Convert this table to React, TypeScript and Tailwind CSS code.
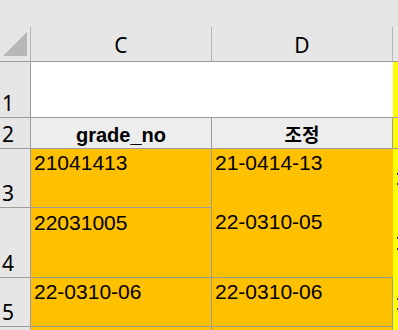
const hdr = "bg-[#e6e6e6] text-[21px] text-black [font-family:'Noto_Sans','Noto_Sans_CJK_KR',sans-serif]";
const num = "text-[21px] leading-none text-black [font-family:'Liberation_Sans',Arial,sans-serif]";

function RowHead({ n }: { n: string }) {
	return (
		<div className={`${hdr} flex items-end border-r border-b border-[#9b9b9b] pl-[2px] leading-[27px]`}>
			<span>{n}</span>
		</div>
	);
}

function ColHead({ label, last }: { label?: string; last?: boolean }) {
	return (
		<div className={`${hdr} flex flex-col justify-end border-b border-[#9b9b9b]`}>
			<div
				className={`flex h-[34px] items-center justify-center pt-[2px] leading-[27px] ${
					last ? "" : "border-r border-[#b4b4b4]"
				}`}
			>
				{label}
			</div>
		</div>
	);
}

function Dot() {
	return <div className="ml-[4px] h-[2px] w-[2px] bg-[#3a3000]" />;
}

export default function App() {
	return (
		<div className="grid h-[330px] w-[398px] grid-cols-[31px_181px_181px_1fr] grid-rows-[62px_56px_31px_59px_70px_49px_1fr] overflow-hidden bg-white">
			{/* header row */}
			<div className="flex flex-col justify-end border-b border-[#9b9b9b] bg-[#e6e6e6]">
				<div className="h-[34px] border-r border-[#b4b4b4] pl-[3px] pt-[5px]">
					<svg width="24" height="24" viewBox="0 0 24 24">
						<polygon points="0,24 24,0 24,24" fill="#b7b7b7" />
					</svg>
				</div>
			</div>
			<ColHead label="C" />
			<ColHead label="D" />
			<ColHead last />

			{/* row 1 */}
			<RowHead n="1" />
			<div className="col-span-2 border-b border-[#9b9b9b] bg-white" />
			<div className="border-b border-[#9b9b9b] bg-[#ffff00]" />

			{/* row 2 */}
			<RowHead n="2" />
			<div className="flex items-end justify-center border-r border-b border-[#9b9b9b] bg-[#ededed] pb-[1px]">
				<span className="text-[20px] font-bold leading-[23px] text-black [font-family:'Liberation_Sans',Arial,sans-serif]">
					grade_no
				</span>
			</div>
			<div className="flex items-end justify-center border-r border-b border-[#9b9b9b] bg-[#ededed] pb-[5px]">
				<span className="text-[19px] font-bold leading-none text-black [font-family:'Noto_Sans_CJK_KR',sans-serif]">
					조정
				</span>
			</div>
			<div className="border-b border-[#9b9b9b] bg-[#ffff00]" />

			{/* row 3 */}
			<RowHead n="3" />
			<div className={`${num} border-r border-b border-[#9c9c9c] bg-[#ffc000] pl-[3px] pt-[3px]`}>21041413</div>
			<div className={`${num} row-span-2 flex flex-col border-b border-[#9c9c9c] bg-[#ffc000] pl-[3px] pt-[3px]`}>
				<div>21-0414-13</div>
				<div className="mt-[38px]">22-0310-05</div>
			</div>
			<div className="flex flex-col bg-[#ffff00] pt-[24px]">
				<Dot />
				<div className="mt-[8px]" />
				<Dot />
			</div>

			{/* row 4 */}
			<RowHead n="4" />
			<div className={`${num} border-r border-b border-[#9c9c9c] bg-[#ffc000] pl-[3px] pt-[4px]`}>22031005</div>
			<div className="flex flex-col bg-[#ffff00] pt-[29px]">
				<Dot />
				<div className="mt-[9px]" />
				<Dot />
			</div>

			{/* row 5 */}
			<RowHead n="5" />
			<div className={`${num} border-r border-b border-[#9c9c9c] bg-[#ffc000] pl-[3px] pt-[3px]`}>22-0310-06</div>
			<div className={`${num} border-r border-b border-[#9c9c9c] bg-[#ffc000] pl-[3px] pt-[3px]`}>22-0310-06</div>
			<div className="flex flex-col bg-[#ffff00] pt-[20px]">
				<Dot />
				<div className="mt-[8px]" />
				<Dot />
			</div>

			{/* row 6 */}
			<div className="border-r border-[#9b9b9b] bg-[#e6e6e6]" />
			<div className="border-r border-[#9c9c9c] bg-[#ffc000]" />
			<div className="border-r border-[#9c9c9c] bg-[#ffc000]" />
			<div className="bg-[#ffff00]" />
		</div>
	);
}
